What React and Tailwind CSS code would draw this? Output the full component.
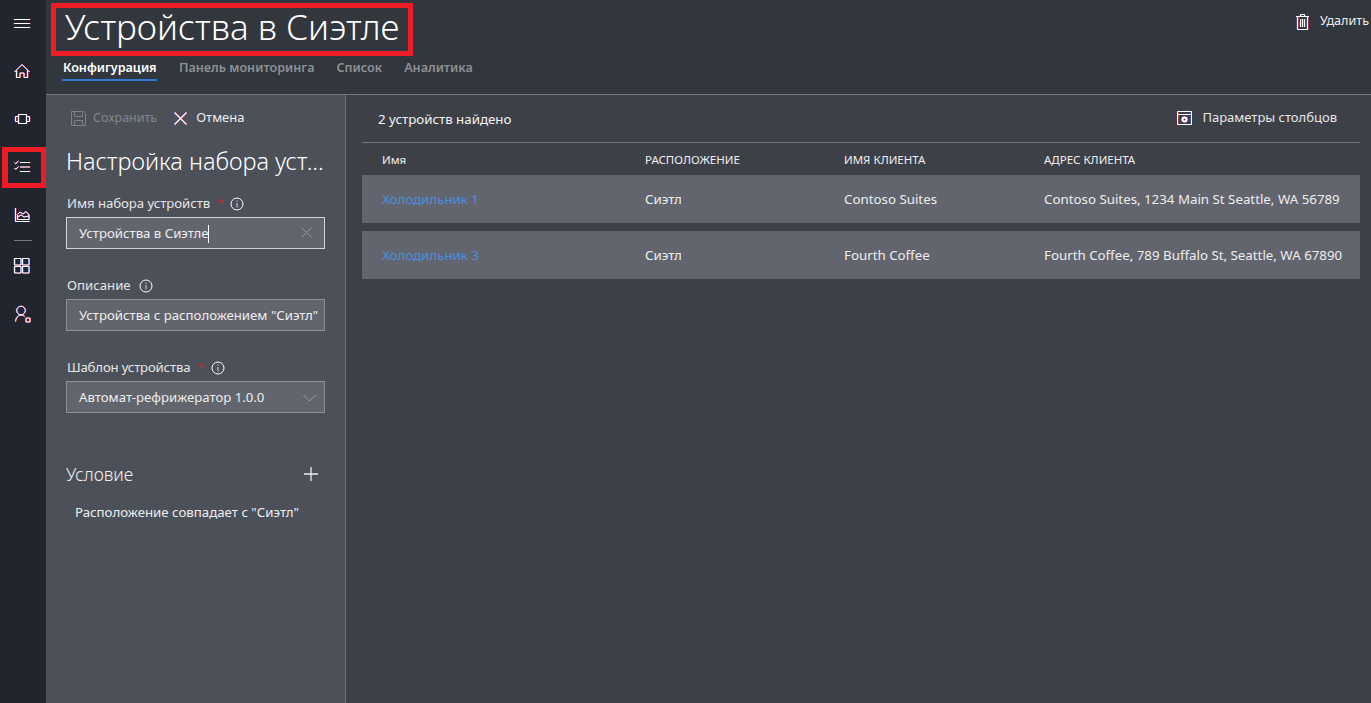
import React from 'react';

// white strokes with the blue/red edge the screenshot's subpixel rendering gives
const Fringe = ({ children }) => (
  <>
    <g stroke="#3f62ff" transform="translate(-.5 0)">{children}</g>
    <g stroke="#ff3b3b" transform="translate(.5 0)">{children}</g>
    <g stroke="#fff">{children}</g>
  </>
);

const Info = () => (
  <svg width="14" height="14" viewBox="0 0 14 14" fill="none" stroke="#fff" strokeWidth="1">
    <circle cx="7" cy="7" r="6" />
    <path d="M7 3.500v1.200M7 6v4.500" stroke="#cfd6ff" />
  </svg>
);

// viewBox follows page y so each icon can be read straight off the reference
const NavIcon = ({ top, height, children }) => (
  <svg className="shrink-0" width="46" height={height} viewBox={`0 ${top} 46 ${height}`} fill="none" strokeWidth="1">
    <Fringe>{children}</Fringe>
  </svg>
);

const rows = [
  ['Холодильник 1', 'Сиэтл', 'Contoso Suites', 'Contoso Suites, 1234 Main St Seattle, WA 56789'],
  ['Холодильник 3', 'Сиэтл', 'Fourth Coffee', 'Fourth Coffee, 789 Buffalo St, Seattle, WA 67890'],
];

const Field = ({ label, labelClass = '', required, children, className = '' }) => (
  <div className={className}>
    <div className="flex items-center h-[20px] pt-[2px] text-[13.200px] text-[#e6e6e6] ml-px">
      <span className={labelClass}>{label}</span>
      {required && <span className="text-[#b0352f] ml-[7px] mr-[6px]">*</span>}
      <span className={required ? '' : 'ml-[8px]'}><Info /></span>
    </div>
    {children}
  </div>
);

export default function App() {
  return (
    <div className="flex h-[703px] w-[1371px] overflow-hidden bg-[#3e4048] text-white font-['Noto_Sans','Open_Sans',sans-serif]">
      {/* Nav rail */}
      <aside className="w-[46px] shrink-0 bg-[#21252e] flex flex-col items-stretch">
        <NavIcon top={0} height={48}>
          <path d="M14 19.500h16M14 23.500h16M14 27.500h16" />
        </NavIcon>
        <NavIcon top={48} height={47}>
          <path d="M14.500 72 22 64.500 29.500 72M16.500 70.500v7h3.500v-4.500h4v4.500h3.500v-7" />
        </NavIcon>
        <NavIcon top={95} height={52}>
          <path d="M18.500 114.500h8v9h-8zM18 116.500h-2.500v5H18M27 116.500h2.500v5H27" />
        </NavIcon>
        <div className="h-[41px] ml-[2px] border-[5px] border-l-[6px] border-[#ee1c25]">
          <svg width="33" height="31" viewBox="8 152 33 31" fill="none" strokeWidth="1">
            <Fringe>
              <path d="M20 162.500h10M20 167h10M20 171.500h10M14.500 162.500l1.200 1.300 2.800-2.800M14.500 168l1.200 1.300 2.800-2.800" />
            </Fringe>
          </svg>
        </div>
        <NavIcon top={188} height={52}>
          <path d="M15.500 208v13.500h14M17.500 219.500v-5l2.500-2.500 3 2 3-2.500 3 3.500v4.500zM17.500 217l3.500-2 3 2 5-1" />
        </NavIcon>
        <div className="h-px bg-[#74767b] mx-[14px] shrink-0" />
        <NavIcon top={241} height={48}>
          <path d="M14.500 258.500H21v6.500h-6.500zM22.500 258.500H29v6.500h-6.500zM14.500 266.500H21v6.500h-6.500zM22.500 266.500H29v6.500h-6.500z" />
        </NavIcon>
        <NavIcon top={289} height={48}>
          <circle cx="21" cy="310.500" r="4.300" />
          <path d="M15.500 321.500c.4-3.600 2.500-6.500 5.500-6.500 1.500 0 2.700.5 3.700 1.500M26 318h4v4h-4z" />
        </NavIcon>
      </aside>

      <div className="flex-1 flex flex-col min-w-0">
        {/* Page header */}
        <header className="h-[95px] shrink-0 bg-[#32363d] border-b border-[#76777a] pl-[5px] pt-[3px] flex justify-between">
          <div>
            <div className="w-[362px] h-[53px] border-[5px] border-[#ee1c25] pl-[9px] pb-[6px] flex items-center">
              <h1 className="text-[35px] leading-none font-light whitespace-nowrap">Устройства в Сиэтле</h1>
            </div>
            <nav className="flex mt-[3px] ml-[11px] text-[12.600px] font-semibold text-[#8e9195]">
              <span className="w-[95px] h-[22px] pl-px text-white border-b-2 border-[#2f79d3] mr-[22px]">Конфигурация</span>
              <span className="mr-[22px]">Панель мониторинга</span>
              <span className="mr-[22px]">Список</span>
              <span>Аналитика</span>
            </nav>
          </div>
          <div className="flex items-start gap-[11px] pt-[11px] pr-[2px] text-[12.600px] text-[#eee]">
            <svg width="13" height="16" viewBox="0 0 13 16" fill="none" strokeWidth="1">
              <Fringe>
                <path d="M0 2.500h13M1.500 3v12.500h10V3M4.500 2.500v-2h4v2M4.500 5v8M6.500 5v8M8.500 5v8" />
              </Fringe>
            </svg>
            <span className="-mt-[2px]">Удалить</span>
          </div>
        </header>

        <div className="flex-1 flex min-h-0">
          {/* Config panel */}
          <section className="w-[300px] shrink-0 bg-[#4c5058] border-r border-[#6d6f74] pl-[20px] pr-[20px]">
            <div className="flex items-center h-[46px] text-[13px]">
              <svg className="ml-[5px]" width="15" height="15" viewBox="0 0 15 15" fill="none" stroke="#7d8086" strokeWidth="1">
                <path d="M.5.500h12l2 2v12H.500zM3.500.500v5h8v-5M3.500 14.500v-5h8v5" />
              </svg>
              <span className="ml-[7px] text-[12.500px] text-[#83868b]">Сохранить</span>
              <svg className="ml-[17px]" width="13" height="13" viewBox="0 0 13 13" fill="none" strokeWidth="1.100">
                <Fringe>
                  <path d="M.5.500l12 12M12.500.500l-12 12" />
                </Fringe>
              </svg>
              <span className="ml-[9px] text-[#eee]">Отмена</span>
            </div>
            <h2 className="mt-[3px] text-[23.500px] leading-[34px] font-light whitespace-nowrap">Настройка набора уст...</h2>

            <Field label="Имя набора устройств" labelClass="tracking-[-0.05px]" required className="mt-[15px]">
              <div className="relative mt-[4px] h-[32px] w-[259px] bg-[#62656d] border border-[#d4d5d7] pl-[12px] pt-px flex items-center text-[13.200px] text-[#eee]">
                <span>Устройства в Сиэтле</span>
                <span className="w-px h-[18px] bg-white" />
                <svg className="absolute right-[12px] top-[9px]" width="11" height="11" viewBox="0 0 11 11" fill="none" stroke="#94969b">
                  <path d="M.5.500l10 10M10.500.500l-10 10" />
                </svg>
              </div>
            </Field>

            <Field label="Описание" className="mt-[26px]">
              <div className="mt-[4px] h-[32px] w-[259px] bg-[#62656d] border border-[#8d8f94] pl-[12px] pt-px flex items-center text-[13.200px] text-[#eee] whitespace-nowrap">
                Устройства с расположением "Сиэтл"
              </div>
            </Field>

            <Field label="Шаблон устройства" labelClass="tracking-[-0.18px]" required className="mt-[26px]">
              <div className="mt-[4px] h-[32px] w-[259px] bg-[#62656d] border border-[#8d8f94] pl-[12px] pr-[8px] pt-px flex items-center justify-between text-[13.200px] text-[#eee]">
                <span>Автомат-рефрижератор 1.0.0</span>
                <svg width="13" height="8" viewBox="0 0 13 8" fill="none" stroke="#a0a2a6">
                  <path d="M.5 1l6 6 6-6" />
                </svg>
              </div>
            </Field>

            <div className="mt-[47px] flex items-center justify-between h-[28px]">
              <span className="pt-px text-[17.500px] font-light text-[#f0f0f0]">Условие</span>
              <svg className="mr-[7px]" width="14" height="14" viewBox="0 0 14 14" fill="none" stroke="#e8eef2" strokeWidth="1.300">
                <path d="M7 0v14M0 7h14" />
              </svg>
            </div>
            <div className="mt-[14px] ml-[9px] text-[13.250px] leading-[20px] text-[#eee] whitespace-nowrap">
              Расположение совпадает с "Сиэтл"
            </div>
          </section>

          {/* Device list */}
          <section className="flex-1 min-w-0 bg-[#3e4048] pl-[16px] pr-[11px]">
            <div className="h-[48px] border-b border-[#75767a] flex items-center justify-between text-[13px]">
              <span className="ml-[16px] mt-[3px] text-[13.300px] text-[#f4f4f4]">2 устройств найдено</span>
              <div className="flex items-center gap-[10px] mr-[23px] -mt-[2px] text-[#e6e6e6]">
                <svg width="15" height="14" viewBox="0 0 15 14" fill="none" strokeWidth="1">
                  <Fringe>
                    <path d="M.5.500h14v13H.500zM.5 3.500h14" />
                    <circle cx="7.500" cy="8.500" r="2" strokeWidth="2" />
                  </Fringe>
                </svg>
                <span>Параметры столбцов</span>
              </div>
            </div>
            <div className="grid grid-cols-[263px_199px_200px_1fr] pl-[20px] pt-px h-[32px] items-center text-[11.500px] text-[#eee]">
              <span>Имя</span>
              <span>РАСПОЛОЖЕНИЕ</span>
              <span>ИМЯ КЛИЕНТА</span>
              <span>АДРЕС КЛИЕНТА</span>
            </div>
            <div className="flex flex-col gap-[8px]">
              {rows.map((row) => (
                <div key={row[0]} className="grid grid-cols-[263px_199px_200px_1fr] pl-[20px] pt-px h-[48px] items-center bg-[#62656d] text-[13.300px] text-[#eee] whitespace-nowrap">
                  <span className="text-[#4a8fdf]">{row[0]}</span>
                  <span>{row[1]}</span>
                  <span>{row[2]}</span>
                  <span>{row[3]}</span>
                </div>
              ))}
            </div>
          </section>
        </div>
      </div>
    </div>
  );
}
